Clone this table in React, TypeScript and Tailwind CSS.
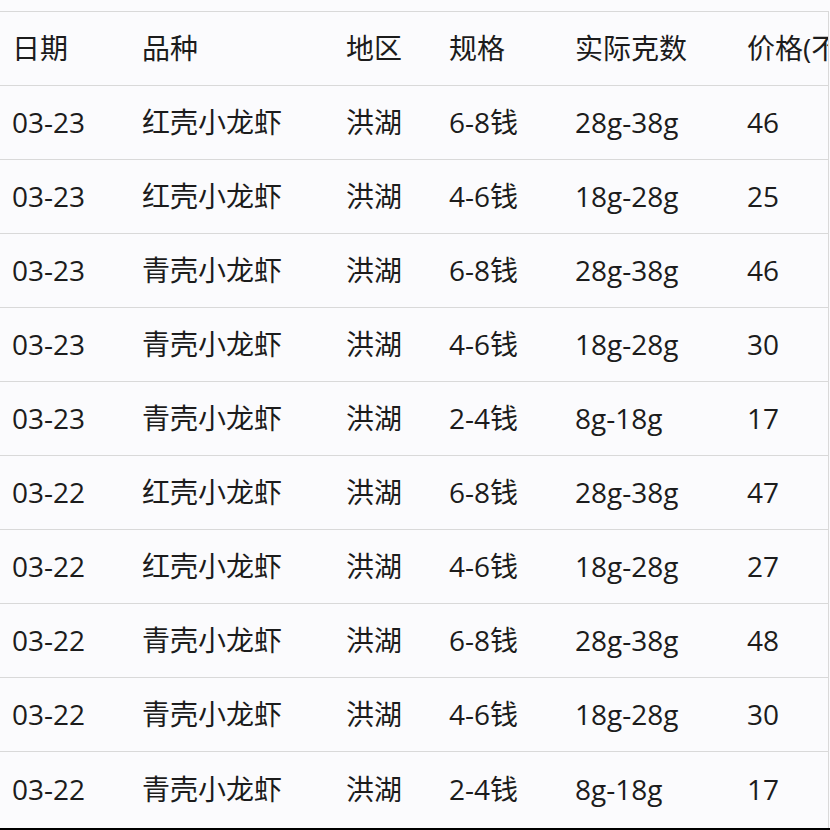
const header = ["日期", "品种", "地区", "规格", "实际克数", "价格(不含运费)"];

const rows = [
  ["03-23", "红壳小龙虾", "洪湖", "6-8钱", "28g-38g", "46"],
  ["03-23", "红壳小龙虾", "洪湖", "4-6钱", "18g-28g", "25"],
  ["03-23", "青壳小龙虾", "洪湖", "6-8钱", "28g-38g", "46"],
  ["03-23", "青壳小龙虾", "洪湖", "4-6钱", "18g-28g", "30"],
  ["03-23", "青壳小龙虾", "洪湖", "2-4钱", "8g-18g", "17"],
  ["03-22", "红壳小龙虾", "洪湖", "6-8钱", "28g-38g", "47"],
  ["03-22", "红壳小龙虾", "洪湖", "4-6钱", "18g-28g", "27"],
  ["03-22", "青壳小龙虾", "洪湖", "6-8钱", "28g-38g", "48"],
  ["03-22", "青壳小龙虾", "洪湖", "4-6钱", "18g-28g", "30"],
  ["03-22", "青壳小龙虾", "洪湖", "2-4钱", "8g-18g", "17"],
];

function Row({ cells, last }: { cells: string[]; last?: boolean }) {
  return (
    <div
      className={`grid h-[74px] grid-cols-[130px_204px_103px_126px_172px_1fr] items-center pl-[12px] ${
        last ? "" : "border-b border-[#d9d9d9]"
      }`}
    >
      {cells.map((c, i) => (
        <div key={i} className="whitespace-nowrap">
          {c}
        </div>
      ))}
    </div>
  );
}

export default function App() {
  return (
    <div
      className="flex h-[830px] w-[830px] flex-col overflow-hidden bg-[#fbfbfd] text-[28px] leading-[1.3] text-[#1c1c1c]"
      style={{ fontFamily: '"Open Sans", "Noto Sans CJK SC", sans-serif' }}
    >
      <div className="mt-[11px] w-[829px] flex-1 overflow-hidden border-t border-r border-[#d9d9d9]">
        <Row cells={header} />
        {rows.map((r, i) => (
          <Row key={i} cells={r} last={i === rows.length - 1} />
        ))}
      </div>
      <div className="h-[2px] bg-black" />
    </div>
  );
}
